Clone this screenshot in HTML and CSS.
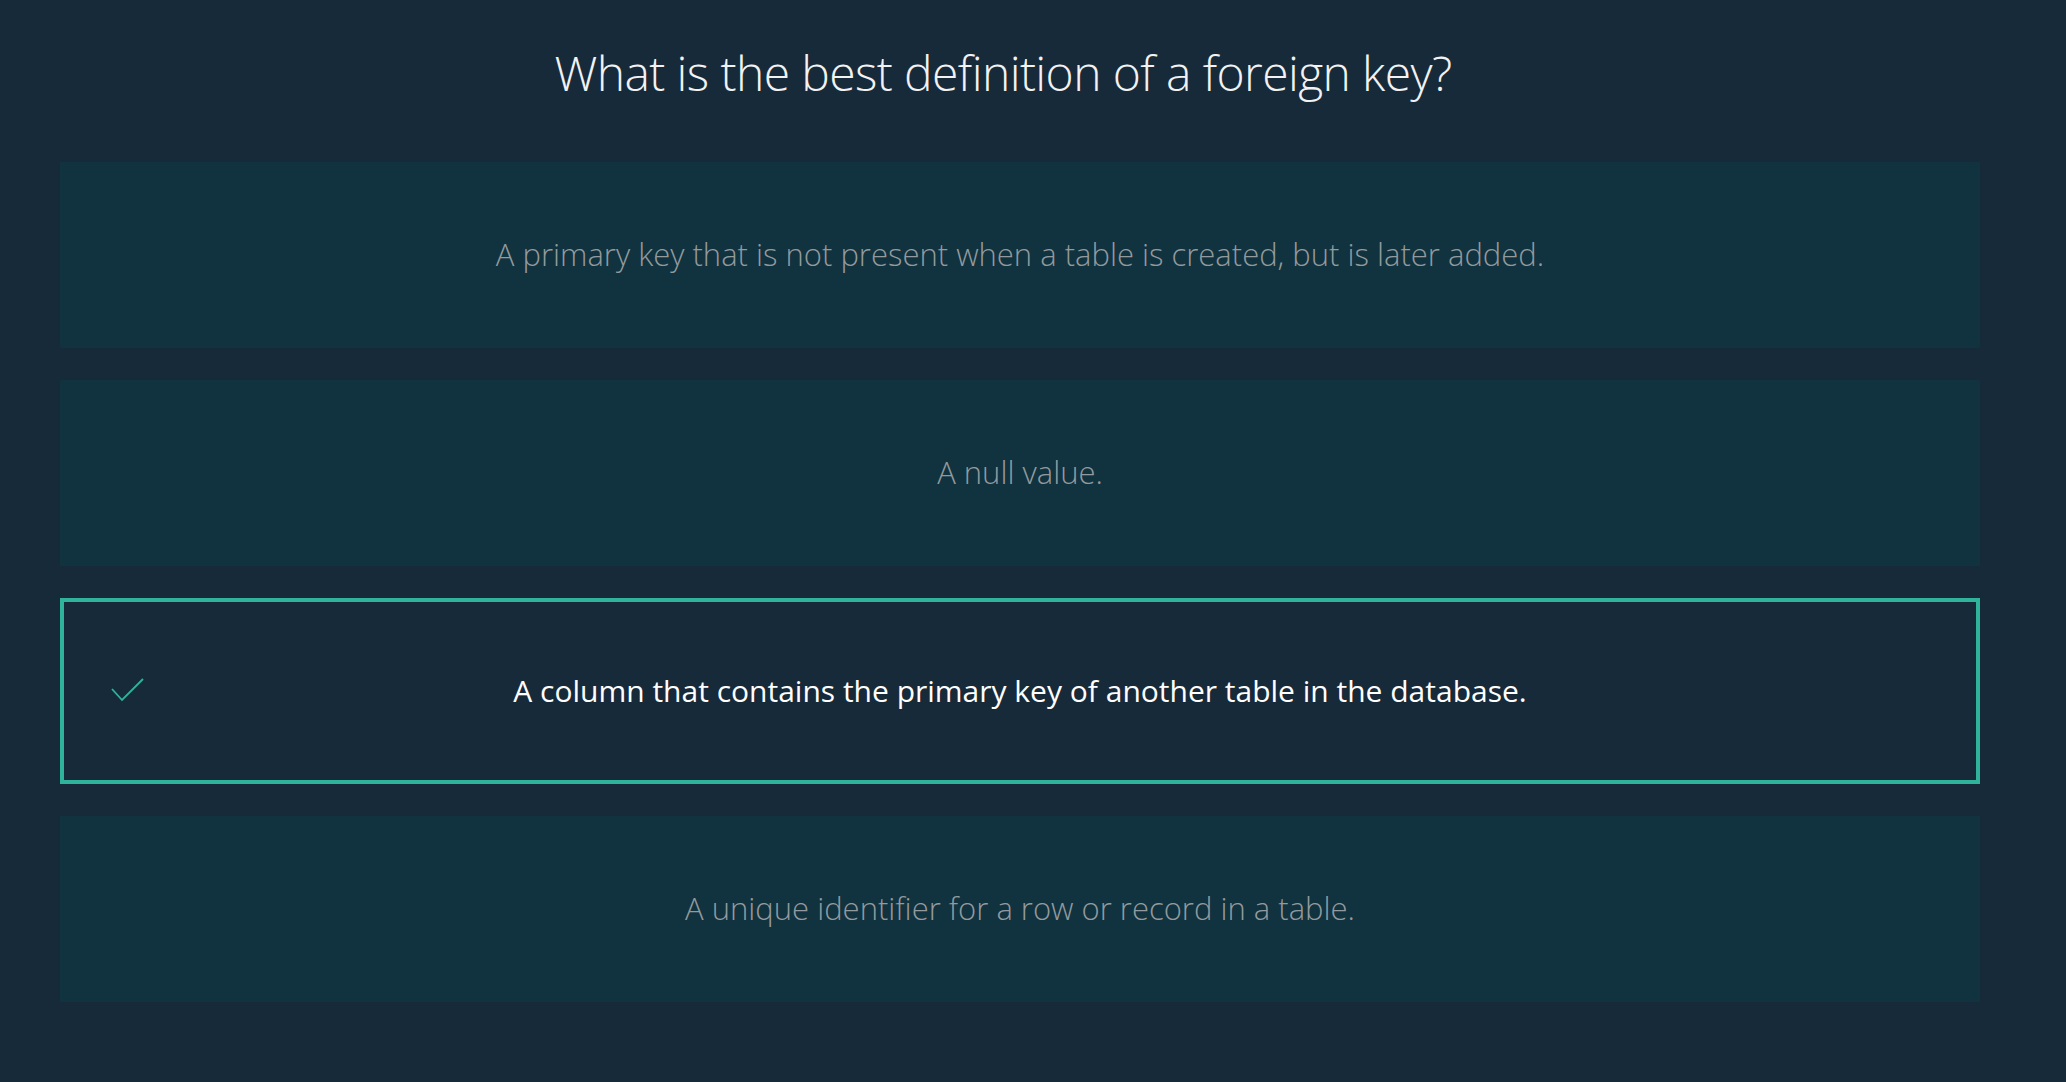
FILE: index.html
```html
<!DOCTYPE html>
<html lang="en">
<head>
<meta charset="utf-8">
<title>Quiz</title>
<link rel="stylesheet" href="styles.css">
</head>
<body>
<main class="quiz">
  <header class="quiz-header">
    <h1 class="quiz-question">What is the best definition of a foreign key?</h1>
  </header>
  <ul class="options">
    <li class="option"><span class="option-text">A primary key that is not present when a table is created, but is later added.</span></li>
    <li class="option"><span class="option-text">A null value.</span></li>
    <li class="option option-correct">
      <svg class="check" width="34" height="24" viewBox="0 0 34 24" aria-hidden="true"><polyline points="1,11 11,22 32,1" fill="none" stroke="#2fb39a" stroke-width="1.8"/></svg>
      <span class="option-text">A column that contains the primary key of another table in the database.</span>
    </li>
    <li class="option"><span class="option-text">A unique identifier for a row or record in a table.</span></li>
  </ul>
</main>
</body>
</html>
```

FILE: styles.css
```css
* { box-sizing: border-box; }
html, body {
  margin: 0;
  padding: 0;
  background: #172a3a;
  height: 100%;
}
body {
  font-family: "Open Sans", "Noto Sans", sans-serif;
}
.quiz {
  padding: 0 86px 0 60px;
}
.quiz-header {
  height: 144px;
  display: flex;
  align-items: center;
  justify-content: center;
  margin-bottom: 18px;
  padding-right: 34px;
}
.quiz-question {
  margin: 0;
  font-weight: 300;
  font-size: 48px;
  color: #f2f2f2;
  letter-spacing: -0.6px;
}
.options {
  list-style: none;
  margin: 0;
  padding: 0;
  display: flex;
  flex-direction: column;
  gap: 32px;
}
.option {
  position: relative;
  height: 186px;
  background: #11323f;
  display: flex;
  align-items: center;
  justify-content: center;
  padding-bottom: 2px;
}
.option-text {
  font-size: 31px;
  font-weight: 300;
  color: #939a9d;
}
.option-correct {
  background: #172a3a;
  border: 4px solid #2fb39a;
}
.option-correct .option-text {
  color: #ffffff;
  font-size: 30px;
  font-weight: 400;
}
.check {
  position: absolute;
  left: 47px;
  top: 76px;
}
```
